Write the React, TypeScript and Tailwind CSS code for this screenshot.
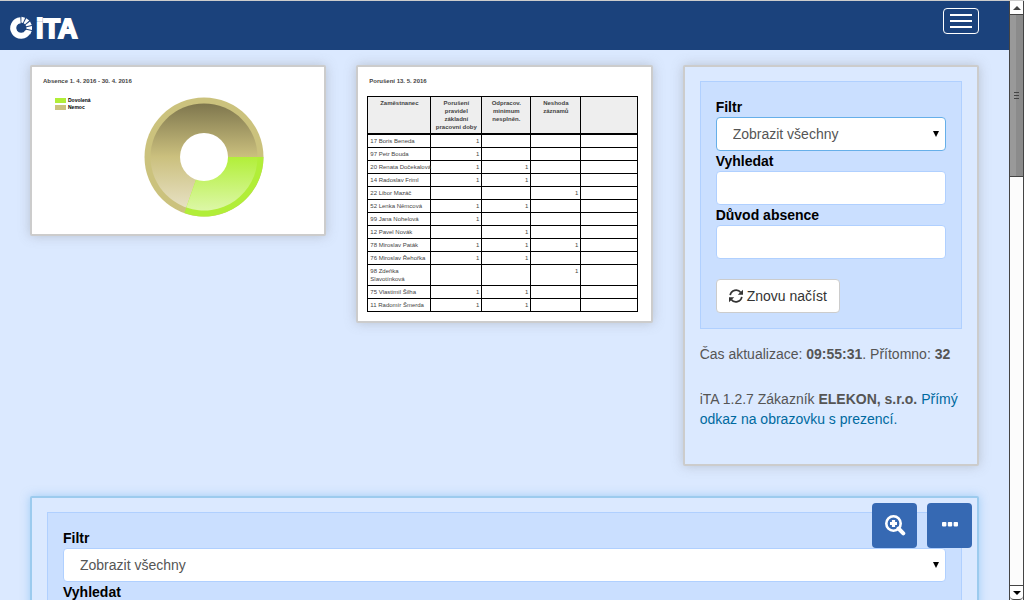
import React from "react";

type Row = { id: string; name: string; marks: [boolean, boolean, boolean] };

const rows: Row[] = [
  { id: "17", name: "Boris Beneda", marks: [true, false, false] },
  { id: "97", name: "Petr Bouda", marks: [true, false, false] },
  { id: "20", name: "Renata Dočekalová", marks: [true, true, false] },
  { id: "14", name: "Radoslav Friml", marks: [true, true, false] },
  { id: "22", name: "Libor Mazáč", marks: [false, false, true] },
  { id: "52", name: "Lenka Němcová", marks: [true, true, false] },
  { id: "99", name: "Jana Nohelová", marks: [true, false, false] },
  { id: "12", name: "Pavel Novák", marks: [false, true, false] },
  { id: "78", name: "Miroslav Paták", marks: [true, true, true] },
  { id: "76", name: "Miroslav Řehořka", marks: [true, true, false] },
  { id: "98", name: "Zdeňka Slavotínková", marks: [false, false, true] },
  { id: "75", name: "Vlastimil Šilha", marks: [true, true, false] },
  { id: "11", name: "Radomír Šmerda", marks: [true, true, false] },
];

// Longer names break onto a second line.
const MAX_LINE_NAME = 18;

const headings = [
  "Zaměstnanec",
  "Porušení pravidel základní pracovní doby",
  "Odpracov. minimum nesplněn.",
  "Neshoda záznamů",
  "",
];

function Logo() {
  const rays = [-78, -52, -26, 0, 26];
  return (
    <svg width="80" height="34" viewBox="0 0 80 34" role="img" aria-label="iTA">
      <path d="M12.5 9.2 A7.8 7.8 0 1 0 20 20.5" fill="none" stroke="#fff" strokeWidth="6" />
      {rays.map((a) => (
        <path key={a} d="M5.4 -0.8 L11 -1.9 L11 1.9 L5.4 0.8 Z" fill="#fff" transform={`translate(13 17) rotate(${a})`} />
      ))}
      <text
        x="28"
        y="27"
        fill="#fff"
        stroke="#fff"
        strokeWidth="2"
        fontSize="27"
        fontWeight="700"
        fontFamily="'Liberation Sans Narrow', 'Liberation Sans', sans-serif"
      >
        iTA
      </text>
    </svg>
  );
}

function Header() {
  return (
    <header className="flex h-[49px] shrink-0 items-start justify-between bg-[#1b427c] pr-[30px] pl-2">
      <a href="#" className="mt-2.5 block">
        <Logo />
      </a>
      <button
        type="button"
        aria-label="Menu"
        className="mt-[7px] flex h-[26px] w-9 flex-col items-center justify-center gap-1 rounded border border-white"
      >
        <span className="h-0.5 w-[22px] bg-white" />
        <span className="h-0.5 w-[22px] bg-white" />
        <span className="h-0.5 w-[22px] bg-white" />
      </button>
    </header>
  );
}

function DonutChart() {
  return (
    <svg width="120" height="120" viewBox="-60 -60 120 120" role="img" aria-label="Absence">
      <defs>
        <linearGradient id="khaki" gradientUnits="userSpaceOnUse" x1="0" y1="-53" x2="0" y2="53">
          <stop offset="0" stopColor="#7f774e" />
          <stop offset="0.5" stopColor="#cbc07e" />
          <stop offset="1" stopColor="#e8e2c6" />
        </linearGradient>
        <linearGradient id="lime" gradientUnits="userSpaceOnUse" x1="0" y1="0" x2="0" y2="53">
          <stop offset="0" stopColor="#b2ef39" />
          <stop offset="1" stopColor="#dcf7a6" />
        </linearGradient>
      </defs>
      <circle r="59.5" fill="#cbc27d" />
      <circle r="53.5" fill="url(#khaki)" />
      <path d="M0 0 H59.5 A59.5 59.5 0 0 1 -19.7 56.1 Z" fill="#b1ee38" />
      <path d="M0 0 H53.5 A53.5 53.5 0 0 1 -17.7 50.5 Z" fill="url(#lime)" />
      <circle r="24" fill="#fff" />
    </svg>
  );
}

const cardClass =
  "rounded-xs border-2 border-[#ccc] shadow-[0_0_12px_rgba(120,120,120,0.35)]";

function AbsenceCard() {
  return (
    <section className={`${cardClass} h-[171px] bg-white px-[11px] pt-2.5`}>
      <h2 className="text-[6px] leading-2 font-bold text-[#444]">Absence 1. 4. 2016 - 30. 4. 2016</h2>
      <div className="mt-3 flex pl-3">
        <ul className="w-[89px] text-[5px] leading-[7px] font-bold text-black">
          <li className="flex items-center gap-0.5">
            <span className="h-[5px] w-[11px] bg-[#b1ee38]" />
            Dovolená
          </li>
          <li className="flex items-center gap-0.5">
            <span className="h-[5px] w-[11px] bg-[#cbc27d]" />
            Nemoc
          </li>
        </ul>
        <DonutChart />
      </div>
    </section>
  );
}

function ViolationsCard() {
  return (
    <section className={`${cardClass} bg-white pt-2.5 pr-[13px] pb-[9px] pl-[9px]`}>
      <h2 className="pl-0.5 text-[6px] leading-2 font-bold text-[#444]">Porušení 13. 5. 2016</h2>
      <table className="mt-[11px] w-full table-fixed border-collapse text-[6px] leading-2 text-[#444]">
        <colgroup>
          <col className="w-[63px]" />
          <col className="w-[51px]" />
          <col className="w-[49px]" />
          <col className="w-[50px]" />
          <col />
        </colgroup>
        <thead>
          <tr className="bg-[#eee]">
            {headings.map((h, i) => (
              <th key={i} className="border border-b-2 border-black px-[3px] py-0.5 text-center align-top font-bold">
                {h}
              </th>
            ))}
          </tr>
        </thead>
        <tbody>
          {rows.map((r) => (
            <tr key={r.id}>
              <td
                className={`border border-black py-0.5 pl-0.5 align-top ${
                  r.name.length > MAX_LINE_NAME ? "whitespace-normal" : "whitespace-nowrap"
                }`}
              >
                {`${r.id} ${r.name}`}
              </td>
              {r.marks.map((m, i) => (
                <td key={i} className="border border-black py-0.5 pr-0.5 text-right align-top">
                  {m ? "1" : ""}
                </td>
              ))}
              <td className="border border-black" />
            </tr>
          ))}
        </tbody>
      </table>
    </section>
  );
}

const fieldClass = "block h-[34px] w-full rounded border bg-white text-sm text-[#555] outline-none";

function FilterForm({ prefix, active }: { prefix: string; active?: boolean }) {
  return (
    <form className="border border-[#b0d0ff] bg-[#cadfff] p-[15px]" onSubmit={(e) => e.preventDefault()}>
      <label htmlFor={`${prefix}-filter`} className="block font-bold text-black">
        Filtr
      </label>
      <div className="relative">
        <select
          id={`${prefix}-filter`}
          className={`${fieldClass} appearance-none px-4 ${active ? "border-[#66afe9]" : "border-[#b0d0ff]"}`}
        >
          <option>Zobrazit všechny</option>
        </select>
        <svg className="pointer-events-none absolute top-[14px] right-[7px]" width="6" height="6" viewBox="0 0 6 6">
          <path d="M0 0 H6 L3 6 Z" fill="#000" />
        </svg>
      </div>
      <label htmlFor={`${prefix}-search`} className="block font-bold text-black">
        Vyhledat
      </label>
      <input id={`${prefix}-search`} type="text" className={`${fieldClass} border-[#b0d0ff] px-3`} />
      <label htmlFor={`${prefix}-reason`} className="block font-bold text-black">
        Důvod absence
      </label>
      <input id={`${prefix}-reason`} type="text" className={`${fieldClass} border-[#b0d0ff] px-3`} />
      <button
        type="submit"
        className="mt-5 flex h-[34px] items-center gap-1 rounded border border-[#ccc] bg-white px-3 text-[#333]"
      >
        <svg width="14" height="14" viewBox="128 128 1536 1536" fill="none" stroke="currentColor" strokeWidth="190" aria-hidden="true">
          <path d="M260 800 A650 650 0 0 1 1420 520" />
          <path d="M1532 992 A650 650 0 0 1 372 1272" />
          <path d="M1664 200 V770 H1094 Z" fill="currentColor" stroke="none" />
          <path d="M128 1592 V1022 H698 Z" fill="currentColor" stroke="none" />
        </svg>
        Znovu načíst
      </button>
    </form>
  );
}

function PresenceCard() {
  return (
    <section className={`${cardClass} bg-[#dbe9ff] pt-[14px] pb-[35px] pl-[15px]`}>
      <div className="pr-[15px]">
        <FilterForm prefix="presence" active />
      </div>
      <p className="mt-[15px]">
        Čas aktualizace: <strong>09:55:31</strong>. Přítomno: <strong>32</strong>
      </p>
      <p className="mt-[25px] pr-2">
        iTA 1.2.7 Zákazník <strong>ELEKON, s.r.o.</strong>{" "}
        <a href="#" className="text-[#0069a0]">
          Přímý odkaz na obrazovku s prezencí.
        </a>
      </p>
    </section>
  );
}

const toolClass = "flex size-[45px] items-center justify-center rounded bg-[#3669b3] text-white";

function DetailCard() {
  return (
    <section className="relative mt-[30px] rounded-xs border-2 border-[#9ccbee] bg-[#dbe9ff] px-[15px] pt-[14px] pb-[35px] shadow-[0_0_10px_rgba(102,175,233,0.5)]">
      <FilterForm prefix="detail" />
      <div className="absolute top-[5px] right-[5px] flex gap-2.5">
        <button type="button" aria-label="Přiblížit" className={toolClass}>
          <svg width="22" height="22" viewBox="0 0 22 22" fill="none" stroke="currentColor" aria-hidden="true">
            <circle cx="9.5" cy="8.5" r="7.2" strokeWidth="2.6" />
            <path d="M9.5 5 V12 M6 8.5 H13" strokeWidth="3.2" />
            <path d="M14.5 13.5 L19.3 18.3" strokeWidth="4" strokeLinecap="round" />
          </svg>
        </button>
        <button type="button" aria-label="Další" className={toolClass}>
          <svg width="16" height="10" viewBox="0 0 16 10" fill="currentColor" aria-hidden="true">
            <rect x="0" y="1" width="4.4" height="4.4" rx="0.8" />
            <rect x="5.8" y="1" width="4.4" height="4.4" rx="0.8" />
            <rect x="11.6" y="1" width="4.4" height="4.4" rx="0.8" />
          </svg>
        </button>
      </div>
    </section>
  );
}

function ScrollRail() {
  return (
    <div aria-hidden="true" className="flex w-[15px] shrink-0 flex-col border-x border-[#444] bg-[#fcfcfc]">
      <div className="flex h-[14px] items-center justify-center rounded-t border-b border-[#444] bg-white">
        <svg width="8" height="4" viewBox="0 0 8 4">
          <path d="M0 4 L4 0 L8 4 Z" fill="#444" />
        </svg>
      </div>
      <div className="flex h-[162px] flex-col items-center justify-center gap-0.5 border-b border-[#444] bg-linear-to-r from-[#999] from-50% to-[#8b8b8b] to-50%">
        <span className="h-px w-[5px] bg-[#444]" />
        <span className="h-px w-[5px] bg-[#444]" />
        <span className="h-px w-[5px] bg-[#444]" />
      </div>
      <div className="flex-1" />
      <div className="flex h-[15px] items-center justify-center rounded-b border-y border-[#444] bg-white">
        <svg width="8" height="4" viewBox="0 0 8 4">
          <path d="M0 0 L4 4 L8 0 Z" fill="#000" />
        </svg>
      </div>
    </div>
  );
}

export default function App() {
  return (
    <div className="flex h-screen border-t border-[#ccc] bg-[#dbe9ff] font-['Liberation_Sans',Arial,sans-serif] text-sm leading-5 text-[#555]">
      <div className="flex min-w-0 flex-1 flex-col overflow-hidden">
        <Header />
        <main className="min-h-0 flex-1 overflow-hidden px-[30px] pt-[15px]">
          <div className="grid grid-cols-3 items-start gap-[30px]">
            <AbsenceCard />
            <ViolationsCard />
            <PresenceCard />
          </div>
          <DetailCard />
        </main>
      </div>
      <ScrollRail />
    </div>
  );
}
